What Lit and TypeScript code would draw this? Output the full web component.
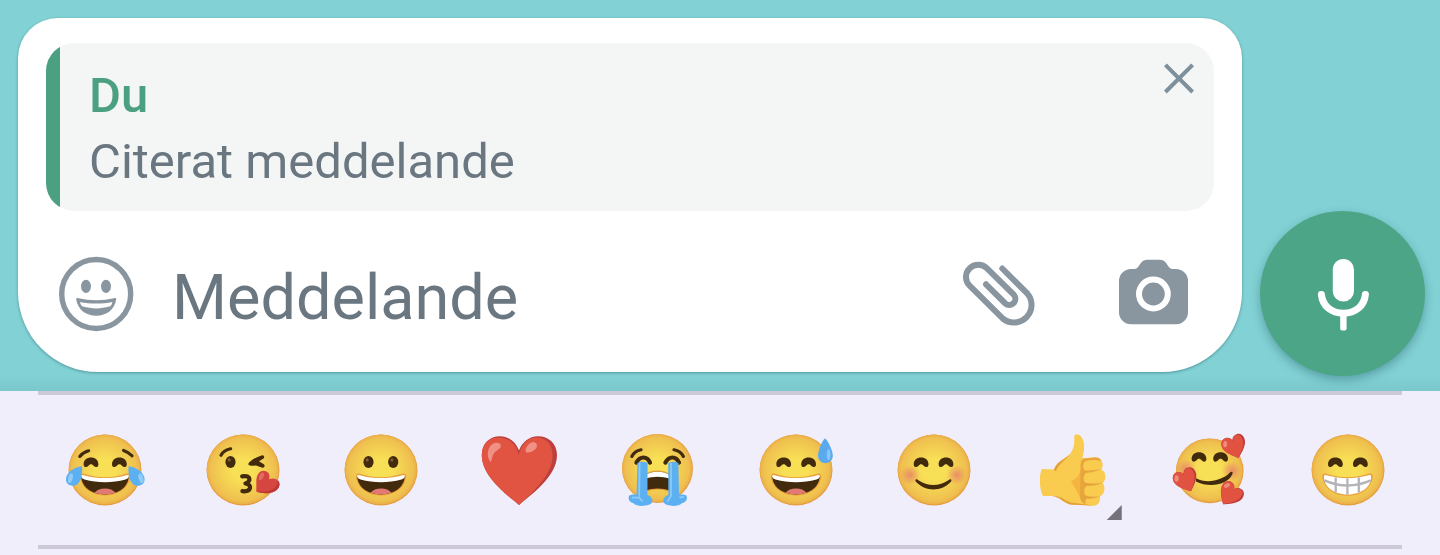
import { LitElement, html, css, svg } from "lit";
import { customElement } from "lit/decorators.js";

const EYE = "#422b0d";

const defs = svg`
  <defs>
    <radialGradient id="face" cx="50%" cy="50%" r="50%">
      <stop offset="0.3" stop-color="#f8e056" />
      <stop offset="0.9" stop-color="#efc04f" />
      <stop offset="1" stop-color="#ebae48" />
    </radialGradient>
    <radialGradient id="blush">
      <stop offset="0" stop-color="#e88268" stop-opacity="0.85" />
      <stop offset="1" stop-color="#e88268" stop-opacity="0" />
    </radialGradient>
  </defs>`;

const face = svg`
  <ellipse cx="40" cy="40" rx="36.5" ry="35.5" fill="#e49b3c" />
  <ellipse cx="39.8" cy="39.5" rx="36" ry="34.9" fill="url(#face)" />`;

/* A closed, smiling eye whose left foot stands at x, y. */
const happyEye = (x: number, y: number) => svg`
  <path transform="translate(${x} ${y})" fill=${EYE}
    d="M0 5.6 C0 1.6 3.2 -1 7.4 -1 C11.6 -1 14.8 1.6 14.8 5.6 C14.8 9 11.8 9.2 10.2 7.4 C9.2 6.2 8.5 5.6 7.4 5.6 C6.3 5.6 5.6 6.2 4.6 7.4 C3 9.2 0 9 0 5.6Z" />`;

const openEye = (x: number, y: number) => svg`
  <ellipse cx=${x} cy=${y} rx="5.1" ry="6.1" fill=${EYE} />
  <ellipse cx=${x - 1.3} cy=${y - 2.1} rx="1.5" ry="1.7" fill="#8a5b33" />`;

const blush = (x: number, y: number) => svg`<circle cx=${x} cy=${y} r="10" fill="url(#blush)" />`;

const brow = (d: string) =>
  svg`<path d=${d} fill="none" stroke=${EYE} stroke-width="3.2" stroke-linecap="round" />`;

const laugh = svg`
  <path d="M18 43.6 C32 48.5 48 48.5 62 43.6 C65 43 66 46 65 49 C62 60 52 65.4 40 65.4 C28 65.4 18 60 15.2 49 C14.3 46 15.4 43 18 43.6Z" fill="#e9a03a" />
  <path d="M16.2 46.6 C31 50.3 49 50.3 63.8 46.6 C63 58 52.5 64.4 40 64.4 C27.5 64.4 17 58 16.2 46.6Z" fill="${EYE}" />
  <path d="M29.6 62.8 C31.5 59.8 35.6 58.4 40 58.4 C44.4 58.4 48.5 59.8 50.4 62.8 C44 65 36 65 29.6 62.8Z" fill="#e07a72" />
  <path d="M16.2 45.6 C16.8 44.4 18.3 45 19.5 45.4 C33 49 47 49 60.5 45.4 C61.8 45 63.2 44.4 63.8 45.6 C64 47.5 63 48.8 60.5 49.5 C47 53.2 33 53.2 19.5 49.5 C17 48.8 16 47.5 16.2 45.6Z" fill="#fff" />`;

/* A heart about 24 units wide, drawn round its own centre. */
const heart = (x: number, y: number, turn: number) => svg`
  <g transform="translate(${x} ${y}) rotate(${turn})">
    <path d="M0 12 C-4 8.6 -12 2.6 -12 -4 C-12 -8.4 -9.4 -11 -6 -11 C-3 -11 -1 -9.4 0 -6.8 C1 -9.4 3.2 -11 6 -11 C9.4 -11 12 -8.4 12 -4 C12 2.6 4 8.6 0 12Z" fill="#bd3b3a" />
    <path d="M0 12 C-4 8.6 -12 2.6 -12 -4 C-12 -8.4 -9.4 -11 -6 -11 C-3 -11 -1 -9.4 0 -5.8 C1 -8.8 3 -10.2 5.4 -10.2 C8.6 -10.2 10 -8 10 -4.2 C10 2 3.6 8 0 12Z" fill="#e15241" />
    <ellipse cx="-8" cy="-5.5" rx="2" ry="3.2" transform="rotate(25 -8 -5.5)" fill="#f08a7e" />
  </g>`;

const art: Record<string, unknown> = {
  joy: svg`${face}
    ${brow("M14.8 26.4 Q18 22.4 23.6 20.8")}${brow("M58.6 20.4 Q63.8 22.2 67 25.8")}
    ${happyEye(18.6, 28.6)}${happyEye(47, 28.6)}${laugh}
    <path d="M17 36.2 C17.6 44 16.4 55.6 7.8 55.8 C2.6 55.8 0.2 52 1.2 47.6 C2.6 41.4 9.4 37.2 17 36.2Z" fill="#5cb0f2" />
    <path d="M63.6 36.2 C63 44 64.2 55.6 72.8 55.8 C78 55.8 80.4 52 79.4 47.6 C78 41.4 71.2 37.2 63.6 36.2Z" fill="#5cb0f2" />
    <ellipse cx="5.4" cy="48.2" rx="2.3" ry="4.9" transform="rotate(14 5.4 48.2)" fill="#8fcdf8" />
    <ellipse cx="76" cy="48.2" rx="2.3" ry="4.9" transform="rotate(-14 76 48.2)" fill="#8fcdf8" />`,
  kiss: svg`${face}
    ${brow("M18 25.2 Q21 20 27.6 18.8")}${openEye(27.5, 32)}
    <path d="M58.6 25.4 C61 24.6 62.2 27.6 60.2 28.8 L56 31.2 L60.8 34.2 C62.8 35.8 61 38.6 58.8 37.6 L53 35.4 C50.6 35.4 48.6 35.8 47 35.6 C44.8 35.4 45 33.2 46.6 32 C50 29 54 26.6 58.6 25.4Z" fill=${EYE} />
    <path d="M39.2 46.4 C48.5 44.6 48 51.6 42.4 53.4 C49.5 54.4 48.6 62.2 39.4 61.2" fill="none" stroke=${EYE} stroke-width="4.2" stroke-linecap="round" stroke-linejoin="round" />
    <path d="M53.2 61.6 C54 55 52.2 49 55 44.2 C57.4 40 62.4 39.6 65.2 42.8 C66.6 44.4 66.8 46.8 66 49.2 C69.4 47.8 73.8 48.2 75.8 51.6 C77.6 55 76 59 71.8 61.2 C66 64 59.4 63.6 53.2 61.6Z" fill="#d4463f" />
    <ellipse cx="58.4" cy="46.4" rx="2.1" ry="4" transform="rotate(24 58.4 46.4)" fill="#e36c62" />
    <path d="M53.2 61.6 C60 62 67.6 61.6 71.6 58 C74 56 75.2 53.6 75 50.6 C77.8 54 76.4 59 71.8 61.2 C66 64 59.4 63.6 53.2 61.6Z" fill="#bd3636" />`,
  grin: svg`${face}${openEye(27.5, 32)}${openEye(52.2, 32)}${laugh}`,
  heart: svg`
    <path d="M40 75 C30 66 2.8 47.5 2.8 25 C2.8 13.4 10.6 6.2 21 6.2 C30 6.2 37 12.4 40 20.4 C43 12.4 50 6.2 59 6.2 C69.6 6.2 78 13.4 78 25 C78 47.5 50 66 40 75Z" fill="#bb3f3c" />
    <path d="M40 75 C30 66 2.8 47.5 2.8 25 C2.8 13.6 10.2 7.4 19.4 7.4 C29.6 7.4 37.6 14.6 39.8 24.6 C42.4 14.6 48.6 7.4 57.4 7.4 C67 7.4 73.6 14 73.6 25.4 C73.6 44 56 60 40 75Z" fill="#e15441" />
    <path d="M12 32.2 C7.6 29 7.6 18.6 12.8 14.6 C16.4 11.6 21.8 12.6 21.8 16 C21.8 19 17.2 20 14.8 23.6 C13 26.4 13 29.6 12 32.2Z" fill="#f19186" />
    <path d="M48 22.6 C45.4 22.4 46.4 17.2 49.8 14.2 C53.4 11 58.2 11.8 58 15.8 C57.8 19.8 52.2 22.8 48 22.6Z" fill="#f19186" />`,
  sob: svg`
    <ellipse cx="40.5" cy="38.5" rx="35.5" ry="34.5" fill="#e49b3c" />
    <ellipse cx="40.2" cy="38.1" rx="35" ry="34" fill="url(#face)" />
    ${brow("M14.8 26.4 Q17.6 21 24 19.8")}${brow("M57 19.8 Q63.6 21 66.4 26.4")}
    <path d="M19.4 32.6 C23 25.8 30 25.8 33 32.6" fill="none" stroke=${EYE} stroke-width="4.2" stroke-linecap="round" />
    <path d="M48.4 32.6 C52 25.8 59 25.8 62 32.6" fill="none" stroke=${EYE} stroke-width="4.2" stroke-linecap="round" />
    <path d="M28 44.6 Q32 40.4 40.6 40.4 Q49 40.4 53 44.6 V62 Q40.6 57 28 62Z" fill="#e9a03a" />
    <path d="M28 46 Q32 41.8 40.6 41.8 Q49 41.8 53 46 V60.4 Q40.6 56.4 28 60.4Z" fill=${EYE} />
    <path d="M28 46 Q32 41.8 40.6 41.8 Q49 41.8 53 46 V48.4 Q40.6 45 28 48.4Z" fill="#fff" />
    <path d="M20.4 33 Q25.6 30.4 30.6 33 L30.4 65 C34.6 66.4 36.4 69.6 35 72.6 C33 76.4 20 77.4 16.4 73.2 C12 72.4 10.4 67.6 12.6 65.2 C15 64 18.4 64.6 19.6 64.6Z" fill="#5cb0f2" />
    <path d="M61.4 33 Q56.2 30.4 51.2 33 L51.4 65 C47.2 66.4 45.4 69.6 46.8 72.6 C49 76.4 61 77.4 64.8 73.2 C69.6 72.4 71.2 67.6 69 65.2 C66.8 64 63.6 64.6 62 64.6Z" fill="#5cb0f2" />
    <path d="M22.6 33.6 L22.2 65.6 M15.6 67.6 L22 67.4 L25 70.8 M54 33.6 V66 L50.8 71 M63 67.4 L66 67" fill="none" stroke="#8ccaf7" stroke-width="1.8" stroke-linecap="round" />`,
  sweat: svg`${face}${happyEye(20.3, 28.6)}${happyEye(45.2, 28.6)}${laugh}
    <path d="M69 8.6 C70.4 8.6 76.8 19.6 76.8 25.8 C76.8 30.2 73.4 33.2 69.4 33.2 C65.2 33.2 62 30.2 62 25.8 C62 19.6 67.6 8.6 69 8.6Z" fill="#5aa9ee" />
    <ellipse cx="72.6" cy="24.6" rx="2" ry="5.6" fill="#86c6f8" />`,
  smile: svg`${face}${blush(16, 45)}${blush(62.7, 45)}${happyEye(19.7, 28.6)}${happyEye(44.6, 28.6)}
    <path d="M21.6 49.6 C22.4 48.8 23.4 49.2 24.4 50.2 C33 56.6 45.6 56.6 54.4 50.2 C55.4 49.2 56.6 48.8 57.2 49.6 C57.8 50.4 57.2 51.6 56.2 52.6 C47 61.8 32 61.8 22.6 52.6 C21.6 51.6 21 50.6 21.6 49.6Z" fill=${EYE} />`,
  thumb: svg`
    <path d="M42.2 7 C42 3.6 46.4 3.4 49 6.4 C53.4 11.6 52.6 20.4 50.4 28.2 L63 27.2 C69.6 27 72.8 34.6 69.2 39.6 C74.8 42 74.4 50.6 70.6 53.2 C74 56.8 72.6 64.4 68 66.2 C68.6 70.8 66.8 75 61.6 75.8 L40 74.6 C31.4 73.6 29 67.4 20.6 66 L11 66 C7.6 60 6.8 47 9.6 39 L22 39.4 C25.4 30 34.8 28.6 38.4 23.4 C42.2 18.4 42.6 13 42.2 7Z" fill="#f9cb4e" />
    <path d="M21.8 39.6 C25.4 30 34.8 28.6 38.4 23.4 C34 30 27.4 33 23.6 41.2Z" fill="#e2a23b" />
    <path d="M20.6 66 C30 65.4 33 71.6 41 72.8 L62 75.6 L40 74.8 C31.4 73.6 29 67.4 20.6 66Z" fill="#e2a23b" />
    <path d="M39 51.4 C45.6 48 48.4 44 48.6 38 L51 72.6 C46.6 66 44 58 39 51.4Z" fill="#f4b440" />
    <path d="M48.6 34 Q49.4 29 52 28.6 L63 27.6 Q68 27.6 69.4 31 Q60 28.8 52.8 31.4 C50.4 34.6 51 38.4 53 40.6 Q60 40.6 69.4 39 Q62 42.4 54 43 C50.8 46 51.2 50.4 53.4 52.8 Q62 54.4 71 52.8 Q62 56.4 54.4 56 C51.4 59 51.6 63 53.8 65.6 Q61 67.8 68.4 66 Q61 69.4 55 68.4 C52.8 70.4 52.6 73 54.6 75.2 Q49 73 48 67Z" fill="#e6a63d" />`,
  adore: svg`
    <ellipse cx="39.8" cy="40.8" rx="33.8" ry="32.4" fill="#e49b3c" />
    <ellipse cx="39.6" cy="40.4" rx="33.2" ry="31.7" fill="url(#face)" />
    ${blush(62, 41)}${blush(16, 39)}${happyEye(21.6, 23.2)}${happyEye(43.2, 23.2)}
    <path d="M26 48.2 C36 54 52 51 60 42.6 C61.6 41 63.2 42 62.4 44 C57 56 38 57.6 26 51.4Z" fill=${EYE} />
    ${heart(64.6, 16.6, -20)}${heart(16.2, 50.2, -24)}${heart(60.2, 64.6, 36)}`,
  beam: svg`${face}${happyEye(20, 28.6)}${happyEye(45, 28.6)}
    <path d="M17.6 43.6 C32 48.5 47 48.5 61.4 43.6 C64.6 43 65.6 46 64.6 49 C61.6 60 51.5 65.8 39.5 65.8 C27.5 65.8 17.5 60 14.6 49 C13.6 46 14.6 43 17.6 43.6Z" fill="#e9a03a" />
    <path d="M16 45.8 C16.6 44.4 18.2 45.2 19.6 45.6 C32 49 47 49 59.6 45.6 C61 45.2 62.6 44.4 63.2 45.8 C63.8 58 52 64.6 39.6 64.6 C27.4 64.6 15.4 58 16 45.8Z" fill="#fff" />
    <path d="M27.7 47.5 V62.4 M39.4 48.4 V64.4 M50.8 47.5 V62.4 M16.4 50.4 Q39.5 60.6 62.8 50.4" fill="none" stroke="#b4b4b8" stroke-width="2.3" />`,
};

const suggestions = [
  { id: "joy", label: "Glädjetårar" },
  { id: "kiss", label: "Slängkyss" },
  { id: "grin", label: "Flinande ansikte" },
  { id: "heart", label: "Rött hjärta" },
  { id: "sob", label: "Storgråter" },
  { id: "sweat", label: "Skratt med svettdroppe" },
  { id: "smile", label: "Leende ansikte" },
  { id: "thumb", label: "Tummen upp", variants: true },
  { id: "adore", label: "Leende med hjärtan" },
  { id: "beam", label: "Strålande ansikte" },
];

@customElement("emoji-bar")
export class EmojiBar extends LitElement {
  static styles = css`
    :host {
      display: block;
      background: #f1eefc;
    }
    .rule {
      height: 4px;
      margin: 0 38px;
      border: 0;
      background: #cdc9d8;
    }
    .strip {
      display: grid;
      grid-template-columns: repeat(10, 1fr);
      padding: 35px 23px 35px 36px;
    }
    .emoji {
      position: relative;
      justify-self: center;
      width: 80px;
      height: 80px;
      padding: 0;
      border: 0;
      background: none;
      cursor: pointer;
    }
    .glyph {
      display: block;
      width: 80px;
      height: 80px;
      overflow: visible;
    }
    .corner {
      position: absolute;
      right: -10px;
      bottom: -10px;
      width: 15px;
      height: 15px;
      background: #74717b;
      clip-path: polygon(100% 0, 100% 100%, 0 100%);
    }
  `;

  render() {
    return html`
      <hr class="rule" />
      <div class="strip">
        ${suggestions.map(
          (s) => html`
            <button class="emoji" type="button" aria-label=${s.label}>
              <svg class="glyph" viewBox="0 0 80 80" aria-hidden="true">${defs}${art[s.id]}</svg>
              ${s.variants ? html`<span class="corner"></span>` : null}
            </button>
          `
        )}
      </div>
      <hr class="rule" />
    `;
  }
}

@customElement("app-root")
export class AppRoot extends LitElement {
  static styles = css`
    :host {
      display: block;
      min-height: 100vh;
      background: #f1eefc;
      font-family: Roboto, "Liberation Sans", sans-serif;
    }
    .composer {
      display: flex;
      align-items: flex-end;
      gap: 18px;
      padding: 18px 15px 15px 18px;
      background: linear-gradient(to top, #7bc8cc, #82d1d4 16px);
    }
    .card {
      flex: 1;
      min-width: 0;
      box-sizing: border-box;
      margin-bottom: 4px;
      padding: 25px 28px 38px;
      border-radius: 40px 40px 80px 80px;
      background: #fff;
      box-shadow: 0 1px 3px rgba(20, 80, 90, 0.45);
    }
    .quote {
      display: flex;
      align-items: flex-start;
      justify-content: space-between;
      padding: 20px 14px 16px 43px;
      border-radius: 28px;
      background: linear-gradient(to right, #4aa081 14px, #f4f6f6 14px);
    }
    .name,
    .excerpt {
      margin: 0;
      font-size: 49px;
      line-height: 66px;
      color: #6a7781;
    }
    .name {
      font-weight: 500;
      color: #4aa081;
    }
    .tool {
      flex: none;
      padding: 0;
      border: 0;
      background: none;
      cursor: pointer;
    }
    .icon {
      display: block;
      width: 80px;
      height: 80px;
    }
    .close .icon {
      width: 42px;
      height: 32px;
    }
    .entry {
      display: flex;
      align-items: center;
      margin-top: 43px;
      padding: 0 21px 0 10px;
    }
    .field {
      flex: 1;
      min-width: 0;
      box-sizing: border-box;
      height: 80px;
      margin: 0 24px 0 36px;
      padding: 6px 0 0;
      border: 0;
      outline: 0;
      background: none;
      font: 400 63px/74px Roboto, "Liberation Sans", sans-serif;
      color: #27343c;
    }
    .field::placeholder {
      color: #6a7781;
      opacity: 1;
    }
    .camera {
      margin-left: 73px;
    }
    .mic {
      display: grid;
      place-items: center;
      flex: none;
      width: 165px;
      height: 165px;
      padding: 0;
      border: 0;
      border-radius: 50%;
      background: #4da587;
      box-shadow: 0 4px 10px rgba(30, 90, 100, 0.4);
      cursor: pointer;
    }
  `;

  render() {
    return html`
      <div class="composer">
        <div class="card">
          <div class="quote">
            <div>
              <p class="name">Du</p>
              <p class="excerpt">Citerat meddelande</p>
            </div>
            <button class="tool close" type="button" aria-label="Ta bort citat">
              <svg class="icon" viewBox="0 0 42 32">
                <path d="M7.4 1.8 L34.6 29 M34.6 1.8 L7.4 29" stroke="#7d909c" stroke-width="4" />
              </svg>
            </button>
          </div>
          <div class="entry">
            <button class="tool" type="button" aria-label="Emoji">
              <svg class="icon" viewBox="0 0 80 80" fill="#8a969f">
                <circle cx="40.2" cy="40" r="34.5" fill="none" stroke="#8a969f" stroke-width="5.4" />
                <ellipse cx="30" cy="32.3" rx="5" ry="6.6" />
                <ellipse cx="50" cy="32.3" rx="5" ry="6.6" />
                <path fill-rule="evenodd" d="M20.2 45.6 C20 44.2 21 43.8 22.6 44.2 C33 46.8 47.4 46.8 57.8 44.2 C59.4 43.8 60.4 44.2 60.2 45.6 C58.6 55.8 50.6 61.8 40.2 61.8 C29.8 61.8 21.8 55.8 20.2 45.6Z M24 48 C24.4 50.4 25.4 51.8 27 52.6 C35 55 45.4 55 53.4 52.6 C55 51.8 56 50.4 56.4 48 C46 50 34.4 50 24 48Z" />
              </svg>
            </button>
            <input class="field" type="text" placeholder="Meddelande" aria-label="Meddelande" />
            <button class="tool" type="button" aria-label="Bifoga">
              <svg class="icon" viewBox="0 0 80 80">
                <path d="M42.3 14.5 L67.4 39.6 A17.6 17.6 0 0 1 42.6 64.4 L9.6 31.7 A12.3 12.3 0 0 1 27 14.3 L53.9 40.9 A6.1 6.1 0 0 1 45.3 49.5 L26 30.3"
                  fill="none" stroke="#8a969f" stroke-width="6" stroke-linecap="round" />
              </svg>
            </button>
            <button class="tool camera" type="button" aria-label="Kamera">
              <svg class="icon" viewBox="0 0 80 80">
                <path d="M34 5.7 H47 C55 5.7 53.6 15 60 15 H63 A12 12 0 0 1 75 27 V58.3 A12 12 0 0 1 63 70.3 H18 A12 12 0 0 1 6 58.3 V27 A12 12 0 0 1 18 15 H21 C27.4 15 26 5.7 34 5.7Z" fill="#8a969f" />
                <circle cx="40.4" cy="40" r="14.4" fill="none" stroke="#fff" stroke-width="6" />
              </svg>
            </button>
          </div>
        </div>
        <button class="mic" type="button" aria-label="Spela in röstmeddelande">
          <svg class="icon" viewBox="0 0 80 80">
            <rect x="29.8" y="5" width="21.2" height="42.6" rx="10.6" fill="#fff" />
            <path d="M18.4 40.4 C19.4 52 28.4 59.2 40.4 59.2 C52.4 59.2 61.4 52 62.4 40.4" fill="none" stroke="#fff" stroke-width="7" stroke-linecap="round" />
            <rect x="37.2" y="58" width="6.4" height="18.6" rx="2" fill="#fff" />
          </svg>
        </button>
      </div>
      <emoji-bar></emoji-bar>
    `;
  }
}
